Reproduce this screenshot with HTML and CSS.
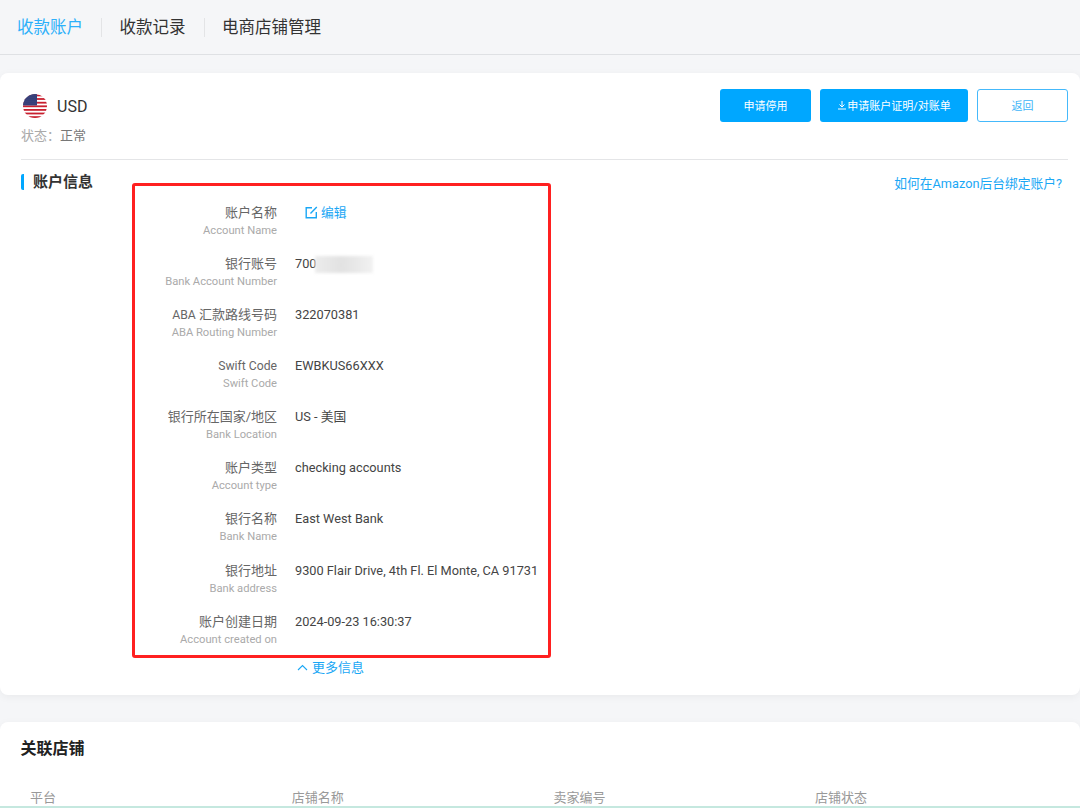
FILE: index.html
```html
<!DOCTYPE html>
<html lang="zh-CN">
<head>
    <meta charset="UTF-8">
    <meta name="viewport" content="width=device-width, initial-scale=1.0">
    <title>收款账户</title>
    <link rel="stylesheet" href="styles.css">
</head>
<body>
    <!-- Top tabs -->
    <nav class="tabs">
        <a class="tab active">收款账户</a>
        <a class="tab">收款记录</a>
        <a class="tab">电商店铺管理</a>
    </nav>

    <!-- Account card -->
    <section class="card account-card">
        <div class="account-head">
            <div>
                <div class="currency">
                    <svg class="flag" width="24" height="24" viewBox="0 0 24 24">
                        <defs>
                            <clipPath id="flagClip"><circle cx="12" cy="12" r="12"/></clipPath>
                            <pattern id="stars" width="2" height="2" patternUnits="userSpaceOnUse">
                                <circle cx="1" cy="1" r="0.45" fill="#aab0d0"/>
                            </pattern>
                        </defs>
                        <g clip-path="url(#flagClip)">
                            <rect width="24" height="24" fill="#fff"/>
                            <rect y="0.500" width="24" height="1.800" fill="#c8202f"/>
                            <rect y="4.100" width="24" height="1.800" fill="#c8202f"/>
                            <rect y="7.800" width="24" height="1.800" fill="#c8202f"/>
                            <rect y="11.400" width="24" height="1.800" fill="#c8202f"/>
                            <rect y="15" width="24" height="1.800" fill="#c8202f"/>
                            <rect y="18.600" width="24" height="1.800" fill="#c8202f"/>
                            <rect y="22.200" width="24" height="1.800" fill="#c8202f"/>
                            <rect width="14" height="11.400" fill="#27306e"/>
                            <rect width="14" height="11.400" fill="url(#stars)"/>
                        </g>
                    </svg>
                    <span class="currency-code">USD</span>
                </div>
                <div class="status"><span class="status-key">状态：</span>正常</div>
            </div>
            <div class="actions">
                <button class="btn primary">申请停用</button>
                <button class="btn primary wide">
                    <svg width="10" height="10" viewBox="0 0 10 10" fill="none" stroke="#fff" stroke-width="1"><path d="M5 1v5.500M2.500 4.500 5 7l2.500-2.500M1 9h8"/></svg>申请账户证明/对账单
                </button>
                <button class="btn outline">返回</button>
            </div>
        </div>

        <div class="info-head">
            <h2 class="info-title">账户信息</h2>
            <a class="help-link">如何在Amazon后台绑定账户?</a>
        </div>

        <div class="details">
            <div class="row">
                <div class="row-label">账户名称<small>Account Name</small></div>
                <div class="row-value link edit">
                    <svg width="13" height="13" viewBox="0 0 13 13" fill="none" stroke="#1aa7f5" stroke-width="1.400"><path d="M7 1.700H1.200v10.100h10.100V6M5.500 7.500 11.800.9"/></svg>编辑
                </div>
            </div>
            <div class="row">
                <div class="row-label">银行账号<small>Bank Account Number</small></div>
                <div class="row-value masked">700<span class="smudge"></span></div>
            </div>
            <div class="row">
                <div class="row-label"><span class="latin">ABA</span> 汇款路线号码<small>ABA Routing Number</small></div>
                <div class="row-value">322070381</div>
            </div>
            <div class="row">
                <div class="row-label"><span class="latin">Swift Code</span><small>Swift Code</small></div>
                <div class="row-value">EWBKUS66XXX</div>
            </div>
            <div class="row">
                <div class="row-label">银行所在国家/地区<small>Bank Location</small></div>
                <div class="row-value">US - 美国</div>
            </div>
            <div class="row">
                <div class="row-label">账户类型<small>Account type</small></div>
                <div class="row-value">checking accounts</div>
            </div>
            <div class="row">
                <div class="row-label">银行名称<small>Bank Name</small></div>
                <div class="row-value">East West Bank</div>
            </div>
            <div class="row">
                <div class="row-label">银行地址<small>Bank address</small></div>
                <div class="row-value">9300 Flair Drive, 4th Fl. El Monte, CA 91731</div>
            </div>
            <div class="row">
                <div class="row-label">账户创建日期<small>Account created on</small></div>
                <div class="row-value">2024-09-23 16:30:37</div>
            </div>
            <div class="highlight"></div>
        </div>

        <a class="more link">
            <svg width="11" height="7" viewBox="0 0 11 7" fill="none" stroke="#1aa7f5" stroke-width="1.100"><path d="M1 6l4.500-4.500L10 6"/></svg>更多信息
        </a>
    </section>

    <!-- Linked shops -->
    <section class="card shops-card">
        <h2 class="shops-title">关联店铺</h2>
        <div class="shops-head">
            <span>平台</span>
            <span>店铺名称</span>
            <span>卖家编号</span>
            <span>店铺状态</span>
        </div>
    </section>
    <div class="bottom-strip"></div>
</body>
</html>
```

FILE: styles.css
```css
html, body {
    height: 808px;
    overflow: hidden;
}
body {
    position: relative;
    margin: 0;
    background-color: #f5f6f8;
    font-family: Roboto, "Noto Sans CJK SC", sans-serif;
    color: #333;
}
.tabs {
    display: flex;
    align-items: center;
    height: 54px;
    padding-left: 17px;
    border-bottom: 1px solid #dfe1e4;
}
.tab {
    font-size: 16.500px;
    line-height: 18px;
    padding-top: 1px;
    color: #333;
}
.tab + .tab {
    margin-left: 18px;
    padding-left: 17.500px;
    border-left: 1px solid #e3e4e6;
}
.tab.active {
    color: #2db0fa;
}
.card {
    background: white;
    border-radius: 8px;
    box-shadow: 0 2px 8px rgba(0,0,0,0.05);
}
.account-card {
    height: 622px;
    margin-top: 18px;
    padding: 0 12px 0 21px;
}
.account-head {
    display: flex;
    justify-content: space-between;
    height: 86px;
    border-bottom: 1px solid #e4e5e7;
}
.currency {
    display: flex;
    align-items: center;
    gap: 10px;
    margin: 20px 0 0 2px;
    font-size: 16px;
    line-height: 24px;
}
.currency-code {
    padding-top: 2px;
}
.status {
    margin-top: 7px;
    font-size: 13px;
    line-height: 20px;
    color: #777;
}
.status-key {
    color: #aaa;
}
.actions {
    display: flex;
    gap: 9px;
    margin-top: 16px;
}
.btn {
    display: flex;
    align-items: center;
    justify-content: center;
    width: 91px;
    height: 33px;
    padding: 0 0 2px;
    border-radius: 3px;
    font-family: inherit;
    font-size: 11px;
}
.btn.primary {
    background-color: #00a7ff;
    border: none;
    color: white;
}
.btn.wide {
    width: 148px;
}
.btn.outline {
    background: white;
    border: 1px solid #45b9fb;
    color: #3eb5f8;
}
.info-head {
    display: flex;
    justify-content: space-between;
    align-items: center;
    margin-top: 13px;
    height: 18px;
}
.info-title {
    margin: 0;
    padding-left: 9px;
    border-left: 3px solid #00a7ff;
    border-radius: 2px 0 0 2px;
    font-size: 15px;
    line-height: 16px;
    font-weight: 700;
}
.help-link {
    margin-right: 6px;
    font-size: 12.750px;
    color: #1aa7f5;
}
.details {
    position: relative;
    width: 517px;
    margin-top: 12.600px;
}
.row {
    display: grid;
    grid-template-columns: 256px 1fr;
    column-gap: 18px;
    height: 51.150px;
}
.row-label {
    text-align: right;
    font-size: 13px;
    line-height: 18px;
    color: #666;
}
.row-label small {
    display: block;
    font-size: 11.200px;
    line-height: 17px;
    color: #aaa;
}
.latin {
    font-size: 12.200px;
}
.row-value {
    font-size: 12.750px;
    line-height: 18px;
    color: #444;
    white-space: nowrap;
}
.link {
    color: #1aa7f5;
}
.edit {
    display: flex;
    align-items: center;
    gap: 3px;
    height: 18px;
    padding-left: 10px;
    color: #1aa7f5;
}
.masked {
    position: relative;
}
.smudge {
    position: absolute;
    left: 20px;
    top: 1px;
    width: 58px;
    height: 17px;
    background: linear-gradient(to right, #ececec, #e2e2e2 45%, #e8e8e8 70%, #f2f2f2);
    filter: blur(1.500px);
}
.highlight {
    position: absolute;
    left: 111px;
    top: -20.600px;
    width: 413px;
    height: 469px;
    border: 3px solid #ff2020;
    border-radius: 3px;
    pointer-events: none;
}
.more {
    display: flex;
    align-items: center;
    gap: 4px;
    margin: -5px 0 0 276px;
    font-size: 13px;
    line-height: 18px;
}
.shops-card {
    height: 90px;
    margin-top: 27px;
    padding: 17px 21px 0 20.500px;
}
.shops-title {
    margin: 0;
    font-size: 16px;
    line-height: 20px;
    font-weight: 700;
    color: #222;
}
.shops-head {
    display: grid;
    grid-template-columns: repeat(4, 261.700px);
    margin-top: 30px;
    padding-left: 9.500px;
    font-size: 13px;
    line-height: 18px;
    color: #999;
}
.bottom-strip {
    position: absolute;
    left: 0;
    right: 0;
    bottom: 0;
    height: 2px;
    background-color: #c5e8df;
}
```
